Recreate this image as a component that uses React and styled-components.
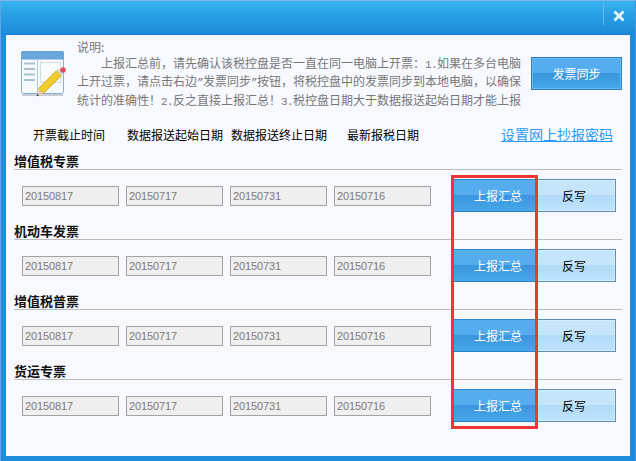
import React from "react";
import styled, { createGlobalStyle } from "styled-components";

const Global = createGlobalStyle`
  html, body { margin: 0; padding: 0; background: #fff; }
  * { box-sizing: border-box; }
`;

const FONT = `"Noto Sans CJK SC", "Liberation Sans", sans-serif`;

const Window = styled.div`
  position: relative;
  width: 636px;
  height: 461px;
  display: flex;
  flex-direction: column;
  padding: 0 5px 5px;
  background: #1f8ddb;
  border-top: 1px solid #7fb4ea;
  border-left: 1px solid #5ea6e6;
  border-right: 1px solid #3d97dc;
  font-family: ${FONT};
  font-size: 12px;
`;
const TitleBar = styled.div`
  flex: none;
  height: 33px;
  margin: 0 -5px;
  padding-right: 8px;
  display: flex;
  justify-content: flex-end;
  align-items: flex-start;
  background: linear-gradient(#37b5ee 0, #2aa2e6 12px, #1c8ad9 33px);
`;
const CloseWrap = styled.div`
  height: 22px;
  margin-top: 2px;
  padding: 5px 0 0 9px;
  border-left: 1px solid #6ab8ea;
  width: 24px;
`;
const Content = styled.div`
  flex: 1;
  min-height: 0;
  background: #f8f9ff;
  border-top: 1px solid #1a7cc9;
  padding: 0 8px 0 0;
  display: flex;
  flex-direction: column;
`;
const Notice = styled.div`
  height: 86px;
  display: flex;
  align-items: flex-start;
`;
const NoteIcon = styled.svg`
  flex: none;
  width: 47px;
  height: 47px;
  margin: 15px 0 0 14px;
`;
const NoteText = styled.div`
  width: 447px;
  margin: 4px 0 0 10px;
  color: #777;
  line-height: 16.2px;
  white-space: nowrap;
  display: flex;
  flex-direction: column;
`;
const NoteFirst = styled.span`
  padding-left: 24px;
`;
const Half = styled.span`
  font-family: "Liberation Mono", monospace;
  font-size: 11px;
  letter-spacing: -0.6px;
`;
const SyncButton = styled.button`
  flex: none;
  width: 91px;
  height: 33px;
  margin: 22px 0 0 9px;
  padding: 0;
  font: 12px ${FONT};
  color: #fff;
  border: 1px solid #2a7fc6;
  background: linear-gradient(#55adf0 0, #55adf0 50%, #3b95de 50%, #45a8e8 100%);
  box-shadow: inset 0 0 0 1px #66b8f0;
`;
const Columns = styled.div`
  height: 26px;
  display: flex;
  align-items: center;
  color: #000;
  white-space: nowrap;
`;
const ColLabel = styled.span`
  flex: none;
  width: ${(p) => p.$w}px;
  margin-left: ${(p) => p.$ml || 0}px;
`;
const SetLink = styled.a`
  margin-left: 10px;
  color: #2c9af4;
  font-size: 14px;
  text-decoration: underline;
`;
const Section = styled.section`
  height: 70px;
  padding: 0 0 0 8px;
  margin-top: ${(p) => p.$mt || 0}px;
`;
const SectionTitle = styled.h3`
  margin: 0;
  height: 16px;
  font: bold 13px/14px ${FONT};
  color: #111;
  border-bottom: 1px solid #bcbcbc;
`;
const Row = styled.div`
  display: flex;
  align-items: center;
  height: 33px;
  margin-top: 9px;
  padding-left: 8px;
`;
const DateBox = styled.div`
  flex: none;
  width: 97px;
  height: 20px;
  margin-right: 7px;
  padding-left: 2px;
  line-height: 18px;
  color: #7a7a7a;
  font-family: "Liberation Sans", sans-serif;
  font-size: 11px;
  letter-spacing: -0.12px;
  background: #efefef;
  border: 1px solid #a3a3a3;
`;
const ButtonPair = styled.div`
  display: flex;
  margin-left: 16px;
`;
const ReportButton = styled.button`
  width: 82px;
  height: 33px;
  padding: 0 0 0 6px;
  font: 12px ${FONT};
  color: #fff;
  border: 0;
  border-top: 1px solid #2f86cf;
  border-bottom: 1px solid #2a7fc6;
  background: linear-gradient(#55adf0 0, #55adf0 50%, #3b95de 50%, #45a8e8 100%);
`;
const RewriteButton = styled.button`
  width: 80px;
  height: 33px;
  padding: 0 3px 0 0;
  font: 12px ${FONT};
  color: #000;
  border: 1px solid #5f8db4;
  border-left: 0;
  background: linear-gradient(#c6e5fb 0, #c6e5fb 50%, #b0dbf9 50%, #bfe3fb 100%);
  box-shadow: inset 0 0 0 1px #d6edfc;
`;
const RedFrame = styled.div`
  position: absolute;
  left: 450px;
  top: 174px;
  width: 87px;
  height: 254px;
  border: 3px solid #f33434;
  pointer-events: none;
`;

const sections = ["增值税专票", "机动车发票", "增值税普票", "货运专票"];
const dates = ["20150817", "20150717", "20150731", "20150716"];

export default function App() {
  return (
    <>
      <Global />
      <Window>
        <TitleBar>
          <CloseWrap>
            <svg width="12" height="12" viewBox="0 0 12 12">
              <path d="M1.5 1.5 L10.5 10.5 M10.5 1.5 L1.5 10.5" stroke="#eaf6fd" strokeWidth="2.8" />
            </svg>
          </CloseWrap>
        </TitleBar>
        <Content>
          <Notice>
            <NoteIcon viewBox="0 0 47 47">
              <rect x="2" y="44" width="41" height="2" fill="#c9ccd4" />
              <rect x="1.5" y="1.5" width="42" height="42" rx="2" fill="#f6f9fd" stroke="#7fb2de" />
              <path d="M1 9V3a2 2 0 0 1 2-2h39a2 2 0 0 1 2 2v6z" fill="#6aa5dc" />
              <rect x="2" y="9" width="41" height="1" fill="#a9cdec" />
              <path d="M17.5 10v33" stroke="#a9cdec" />
              <path d="M4 13.5h11M4 19h11M4 24.5h11M4 30h11" stroke="#aebfce" strokeWidth="2" />
              <rect x="20.5" y="12.5" width="20" height="20" fill="#fafbfd" stroke="#d3dbe3" />
              <path d="M18.5 38.5L36.5 20.5L41.5 25.5L23.5 43.5z" fill="#f2cb2c" stroke="#a78f1f" strokeWidth=".6" />
              <path d="M18.5 38.5L23.5 43.5L17 46z" fill="#eec9a4" />
              <path d="M16.5 46.3l.8-2.8 2 2z" fill="#555" />
              <path d="M36.5 20.5L38.5 18.5L43.5 23.5L41.5 25.5z" fill="#d8d8d8" />
              <circle cx="43" cy="20" r="2.8" fill="#e2505a" />
            </NoteIcon>
            <NoteText>
              <span>说明:</span>
              <NoteFirst>上报汇总前，请先确认该税控盘是否一直在同一电脑上开票：<Half>1.</Half>如果在多台电脑</NoteFirst>
              <span>上开过票，请点击右边<Half>”</Half>发票同步<Half>”</Half>按钮，将税控盘中的发票同步到本地电脑，以确保</span>
              <span>统计的准确性！<Half>2.</Half>反之直接上报汇总！<Half>3.</Half>税控盘日期大于数据报送起始日期才能上报</span>
            </NoteText>
            <SyncButton>发票同步</SyncButton>
          </Notice>
          <Columns>
            <ColLabel $ml={27} $w={94}>开票截止时间</ColLabel>
            <ColLabel $w={104}>数据报送起始日期</ColLabel>
            <ColLabel $w={116}>数据报送终止日期</ColLabel>
            <ColLabel $w={144}>最新报税日期</ColLabel>
            <SetLink>设置网上抄报密码</SetLink>
          </Columns>
          {sections.map((title, i) => (
            <Section key={title} $mt={i === 0 ? 7 : 0}>
              <SectionTitle>{title}</SectionTitle>
              <Row>
                {dates.map((d) => (
                  <DateBox key={d}>{d}</DateBox>
                ))}
                <ButtonPair>
                  <ReportButton>上报汇总</ReportButton>
                  <RewriteButton>反写</RewriteButton>
                </ButtonPair>
              </Row>
            </Section>
          ))}
        </Content>
        <RedFrame />
      </Window>
    </>
  );
}
